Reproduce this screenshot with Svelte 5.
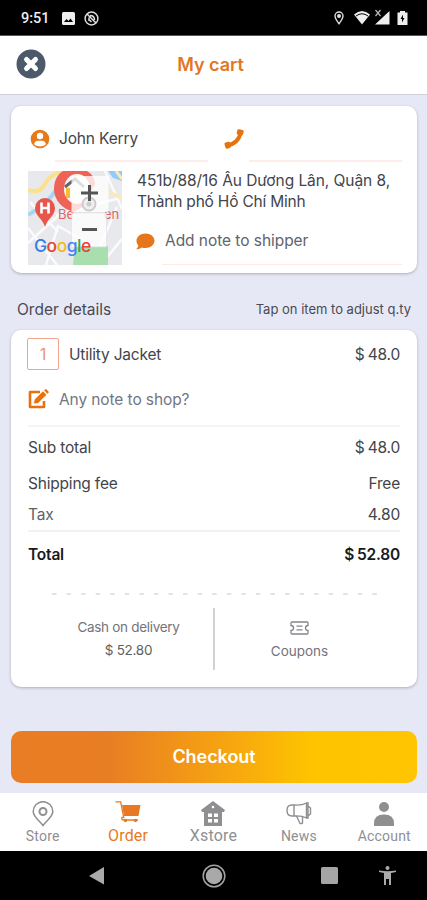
<script>
  let customer = { name: 'John Kerry', phone: '' }
  let item = { qty: 1, name: 'Utility Jacket', price: '$ 48.0' }

  let fees = [
    { key: 'sub', label: 'Sub total', value: '$ 48.0' },
    { key: 'ship', label: 'Shipping fee', value: 'Free' },
    { key: 'tax', label: 'Tax', value: '4.80' },
  ]
  let total = '$ 52.80'

  let tabs = ['Store', 'Order', 'Xstore', 'News', 'Account']
  let active = 'Order'
</script>

<div class="screen">
  <div class="status">
    <span class="time">9:51</span>
    <svg class="photo" width="13" height="13" viewBox="0 0 13 13">
      <rect width="13" height="13" rx="1.5" fill="#eee" />
      <path d="M2 10l2.5-3 2 2 2-2.5L11 10z" fill="#000" />
    </svg>
    <svg width="15" height="15" viewBox="0 0 15 15" fill="none" stroke="#ddd" stroke-width="1.5">
      <circle cx="7.5" cy="7.5" r="6.4" />
      <path d="M3 3l9 9M5 10V6.5M7.5 11l-2-2M6 4.5q4.5 0 4.5 4.5" />
    </svg>
    <div class="signals">
      <svg width="10" height="14" viewBox="0 0 10 14" fill="none" stroke="#ddd" stroke-width="1.4">
        <path d="M5 12.7C3.5 10.5 1 7.5 1 5a4 4 0 018 0c0 2.5-2.5 5.5-4 7.7z" />
        <circle cx="5" cy="5" r="1.3" fill="#ddd" />
      </svg>
      <svg class="wifi" width="16" height="14" viewBox="0 0 16 14">
        <path d="M0 3.5q8-7 16 0L8 13.5z" fill="#eee" />
        <path d="M2 5q6-4.5 12 0" fill="none" stroke="#000" stroke-width="1" />
      </svg>
      <svg class="cell" width="16" height="16" viewBox="0 0 16 16">
        <path d="M15.5 2v13.5H1z" fill="#eee" />
        <path d="M1.5 1l5 6M6.5 1l-5 6" stroke="#bbb" stroke-width="1.2" />
      </svg>
      <svg class="battery" width="11" height="14" viewBox="0 0 11 14">
        <path d="M3 0h5v1.5h2.5V14H.5V1.5H3z" fill="#eee" />
        <path d="M6 3.5L3.5 8H5v3.5L7.5 7H6z" fill="#000" />
      </svg>
    </div>
  </div>

  <header>
    <svg width="30" height="30" viewBox="0 0 30 30">
      <circle cx="15" cy="15" r="14.5" fill="#4c596b" />
      <path d="M10.5 10.5l9 9M19.5 10.5l-9 9" stroke="#fff" stroke-width="5" stroke-linecap="round" />
    </svg>
    <h1>My cart</h1>
  </header>

  <main>
    <section class="card delivery">
      <div class="contact">
        <div class="field">
          <svg width="20" height="20" viewBox="0 0 20 20">
            <circle cx="10" cy="10" r="9.3" fill="#e67a1b" />
            <circle cx="10" cy="7" r="3.2" fill="#fff" />
            <path d="M4 15.2q1-3.4 4-3.4h4q3 0 4 3.4-2.6 2.2-6 2.2t-6-2.2z" fill="#fff" />
          </svg>
          <span>{customer.name}</span>
        </div>
        <div class="field phone">
          <svg width="20" height="20" viewBox="0 0 20 20" fill="#e5740f">
            <path d="M16.300 3.500C16 10 10.500 15.500 3.500 16.300" fill="none" stroke="#e5740f" stroke-width="4" />
            <rect x="13" y=".5" width="6.500" height="5.500" rx="1.5" transform="rotate(14 16 3)" />
            <rect x=".8" y="13" width="5.500" height="6.500" rx="1.5" transform="rotate(-14 3.500 16)" />
          </svg>
          <span>{customer.phone}</span>
        </div>
      </div>

      <div class="place">
        <svg class="map" width="94" height="94" viewBox="0 0 94 94">
          <rect width="94" height="94" fill="#e8e9ec" />
          <path d="M80 0h14v10l-9-3z" fill="#91caff" />
          <path d="M0 44q9-5 17-12T30 15" fill="none" stroke="#a7d5f5" stroke-width="4" />
          <path d="M0 19q12 4 17-6T36 0" fill="none" stroke="#fce18b" stroke-width="4" />
          <path d="M0 72L31 44M18 94l12-39 50 28M2 31l28 30M77 0l17 38M64 94l25-58M28 44l64-17M0 57l29 37M76 90l18-22" fill="none" stroke="#fbfbfd" stroke-width="2.5" />
          <path d="M80 20l14 8M88 0l6 8" fill="none" stroke="#fce9b0" stroke-width="3" />
          <path d="M47 75h33v19H45z" fill="#a9dfaf" />
          <text x="30" y="48" class="district">Be</text>
          <text x="76" y="48" class="district">en</text>
          <path d="M46 41C34 38 26 29 26 18 26 9 30 3 35 0h24c5 3 8 8 8 13L54 36z" fill="#ef6258" />
          <ellipse cx="49" cy="18" rx="13" ry="15" fill="#f8f8f6" />
          <path d="M37 16l10-8 9 8" fill="none" stroke="#63686b" stroke-width="3" />
          <path d="M40 17v10" stroke="#f5bd32" stroke-width="4" />
          <path d="M17 56c-2-8-10-11-10-19a10 10 0 0120 0c0 8-8 11-10 19z" fill="#e8554d" />
          <path d="M13.5 31.5v11M20.5 31.5v11M13.5 37h7" stroke="#fff" stroke-width="2.6" />
          <rect x="43.5" y="5" width="37" height="36" fill="#fff" opacity=".78" />
          <circle cx="61" cy="33" r="6.5" fill="#f0f0f0" stroke="#ccc" stroke-width="2" />
          <circle cx="61" cy="33" r="2.5" fill="#ccc" />
          <path d="M53 22h17M61.5 14v16" stroke="#555" stroke-width="3" />
          <rect x="43.5" y="42" width="35" height="34" fill="#fff" stroke="#ddd" stroke-width=".6" opacity=".8" />
          <text x="6" y="81" class="google"><tspan fill="#3979e8">G</tspan><tspan fill="#e94235">o</tspan><tspan fill="#f5b915">o</tspan><tspan fill="#4285f4">g</tspan><tspan fill="#34a853">l</tspan><tspan fill="#ea4335">e</tspan></text>
          <path d="M54 58.5h15" stroke="#555" stroke-width="3" />
        </svg>
        <div class="address">
          <p><span class="street">451b/88/16 Âu Dương Lân, Quận 8,</span><br /><span class="city">Thành phố Hồ Chí Minh</span></p>
          <div class="shipper">
            <svg width="19" height="17" viewBox="0 0 19 17">
              <path d="M9.5.5c5 0 9 3.2 9 7.3s-4 7.2-9 7.2c-1.4 0-2.6-.2-3.7-.6-1.5 1-3.4 1.8-5.6 1.8 1.2-1.2 2-2.6 2.1-3.8C1.1 11.2.5 9.6.5 7.8c0-4.1 4-7.3 9-7.3z" fill="#e5761a" />
            </svg>
            <span>Add note to shipper</span>
          </div>
        </div>
      </div>
    </section>

    <div class="caption">
      <span>Order details</span>
      <small>Tap on item to adjust q.ty</small>
    </div>

    <section class="card summary">
      <div class="line item">
        <span class="qty">{item.qty}</span>
        <span class="name">{item.name}</span>
        <span class="value">{item.price}</span>
      </div>
      <div class="note">
        <svg width="22" height="20" viewBox="0 0 22 20">
          <path d="M12 3H2v15h14v-6" fill="none" stroke="#e5720d" stroke-width="2.6" stroke-linejoin="round" />
          <path d="M6 14.5l.7-4L15 2.3l3.4 3.4-8.3 8.2zM16 1.3l1-.9q.8-.6 1.6.2L20.3 2.3q.8.8.1 1.6l-1 .9z" fill="#e5720d" />
        </svg>
        <span>Any note to shop?</span>
      </div>
      {#each fees as fee}
        <div class="line {fee.key}">
          <span class="label">{fee.label}</span>
          <span class="value">{fee.value}</span>
        </div>
      {/each}
      <div class="line total">
        <span class="label">Total</span>
        <span class="value">{total}</span>
      </div>

      <svg class="dashes" width="326" height="2" viewBox="0 0 326 2">
        <path d="M0 1h326" stroke="#dadada" stroke-width="1.5" stroke-dasharray="4.5 10.06" />
      </svg>

      <div class="options">
        <div class="option cash">
          <span class="method">Cash on delivery</span>
          <span class="amount">{total}</span>
        </div>
        <div class="option coupons">
          <svg width="19" height="14" viewBox="0 0 19 14" fill="none" stroke="#85868a" stroke-width="1.3">
            <path d="M2 1h15q1 0 1 1v2.5q-2.5 0-2.5 2.5t2.5 2.5V12q0 1-1 1H2q-1 0-1-1V9.500q2.500 0 2.500-2.500T1 4.500V2q0-1 1-1zM6.500 5.200h6M6.500 8.800h6" />
          </svg>
          <span>Coupons</span>
        </div>
      </div>
    </section>

    <button type="button" class="checkout">Checkout</button>
  </main>

  <nav>
    {#each tabs as tab}
      <div class="tab {tab.toLowerCase()}" class:active={tab === active}>
        {#if tab === 'Store'}
          <svg width="22" height="26" viewBox="0 0 22 26" fill="none" stroke="currentColor" stroke-width="1.5">
            <path d="M11 24.5C8 20 1.2 16 1.2 10.5a9.8 9.8 0 0119.6 0C20.8 16 14 20 11 24.5z" />
            <circle cx="11" cy="10.5" r="3.5" stroke-width="2" />
          </svg>
        {:else if tab === 'Order'}
          <svg width="26" height="26" viewBox="0 0 26 26" fill="currentColor">
            <path d="M7 4h18.500l-2 11H9z" />
            <path d="M.5 .8h5.200l3 15.700H7q-.8 2.500 1 2.500h15" fill="none" stroke="currentColor" stroke-width="1.3" />
            <circle cx="10.500" cy="19.500" r="1.700" />
            <circle cx="20.500" cy="19.500" r="1.700" />
          </svg>
        {:else if tab === 'Xstore'}
          <svg width="26" height="26" viewBox="0 0 26 26" fill="currentColor">
            <path d="M13 0l12 9-1 2h-2v14H4V11H2L1 9z" />
            <circle cx="13" cy="6" r="1.3" fill="#fff" />
            <path d="M8 12.500h4V16H8zM14 12.500h4V16h-4zM8 18h4v3.500H8zM14 18h4v3.500h-4z" fill="#fff" />
          </svg>
        {:else if tab === 'News'}
          <svg width="26" height="26" viewBox="0 0 26 26" fill="none" stroke="currentColor" stroke-width="1.4">
            <path d="M8 4H6Q1 4 1 9.500T6 15h2q8-.5 12.500 2V2Q16 4.500 8 4zM8 4v11M20.500 2h1.500v15h-1.500M22 5l2.500 2v6L22 15M10.500 15l3.500 7.500q1.500.5 2.500-.5v-6" />
          </svg>
        {:else}
          <svg width="22" height="26" viewBox="0 0 22 26" fill="currentColor">
            <circle cx="11" cy="6" r="5" />
            <path d="M1 25v-2.500q0-9 10-9t10 9V25z" />
          </svg>
        {/if}
        <span>{tab}</span>
      </div>
    {/each}
  </nav>

  <div class="system">
    <svg width="17" height="20" viewBox="0 0 17 20"><path d="M16 1v17.5L1 10z" fill="#aaa" /></svg>
    <svg width="24" height="24" viewBox="0 0 24 24">
      <circle cx="12" cy="12" r="10.8" fill="none" stroke="#a2a2a2" stroke-width="1.5" />
      <circle cx="12" cy="12" r="8.3" fill="#a9a9a9" />
    </svg>
    <svg width="17" height="17" viewBox="0 0 17 17"><rect width="17" height="17" rx="1.5" fill="#a5a5a5" /></svg>
    <svg width="17" height="19" viewBox="0 0 17 19" fill="#aaa">
      <circle cx="8.5" cy="2" r="2" />
      <path d="M0 4.5q8.5 1.5 17 0V6l-5 1v12h-2v-6H7v6H5V7L0 6z" />
    </svg>
  </div>
</div>

<style>
  :global(body) {
    background: #e7e8f6;
  }

  .screen {
    width: 427px;
    height: 900px;
    overflow: hidden;
    background: #e7e8f6;
    color: #42454b;
    font-family: Inter, "Open Sans", sans-serif;
    font-size: 15.5px;
    display: flex;
    flex-direction: column;
  }

  svg {
    display: block;
    flex: none;
  }

  .status {
    height: 36px;
    flex: none;
    border-bottom: 1px solid #555;
    box-sizing: border-box;
    background: #000;
    display: flex;
    align-items: center;
    padding: 1px 19px 0 21px;
  }

  .time {
    color: #eee;
    font: 500 14.5px Roboto, sans-serif;
    width: 41px;
  }

  .photo {
    margin-right: 9px;
  }

  .signals {
    display: flex;
    align-items: center;
    margin-left: auto;
  }

  .wifi {
    margin-left: 10px;
  }

  .cell {
    margin: -2px 0 0 4px;
  }

  .battery {
    margin-left: 7px;
  }

  header {
    height: 58px;
    flex: none;
    background: #fff;
    border-bottom: 1px solid #cfd0da;
    display: flex;
    align-items: center;
    padding: 0 16px;
  }

  header svg {
    margin-top: -2px;
  }

  h1 {
    flex: 1;
    margin: -2px 36px 0 0;
    text-align: center;
    color: #e2771f;
    font-size: 18px;
    font-weight: 600;
  }

  main {
    height: 698px;
    flex: none;
    padding: 11px 10px 0 11px;
    box-sizing: border-box;
  }

  .card {
    background: #fff;
    border-radius: 10px;
    box-shadow: 0 1px 3px rgba(60, 60, 85, .35);
    box-sizing: border-box;
  }

  .delivery {
    height: 167px;
    padding: 0 15px 0 17px;
  }

  .contact {
    display: flex;
    height: 65px;
  }

  .field {
    display: flex;
    align-items: center;
    width: 195px;
    padding: 8px 0 0 2px;
    box-sizing: border-box;
    gap: 9px;
    background: linear-gradient(#ffedeb, #ffedeb) 27px 54px / 153px 2px no-repeat;
    height: 57px;
    letter-spacing: -.15px;
  }

  .phone {
    width: 179px;
    padding-left: 1px;
    background-position: 26px 54px;
  }

  .place {
    display: flex;
    height: 94px;
  }

  .district {
    fill: #df6462;
    font-size: 13px;
  }

  .google {
    font: 500 17.5px Inter, sans-serif;
    letter-spacing: -.5px;
  }

  .address {
    margin-left: 15px;
    flex: 1;
  }

  .address p {
    margin: 0;
    line-height: 20.5px;
    white-space: nowrap;
  }

  .street {
    letter-spacing: -.06px;
  }

  .city {
    letter-spacing: -.2px;
  }

  .shipper {
    display: flex;
    align-items: center;
    gap: 10px;
    height: 53px;
    padding-top: 5px;
    box-sizing: border-box;
    color: #60636c;
    letter-spacing: -.05px;
    background: linear-gradient(#ffe9e2, #ffe9e2) 25px 52px / 241px 1px no-repeat;
    line-height: 20px;
  }

  .shipper svg {
    margin-left: -1px;
  }

  .caption {
    display: flex;
    justify-content: space-between;
    align-items: center;
    height: 57px;
    padding: 16px 6px 0;
    box-sizing: border-box;
    color: #494a53;
    font-size: 15.5px;
  }

  .caption small {
    font-size: 13px;
    margin-top: -1px;
  }

  .summary {
    height: 357px;
    padding: 0 17px;
  }

  .line {
    display: flex;
    align-items: center;
    justify-content: space-between;
    letter-spacing: -.2px;
  }

  .value {
    word-spacing: -1px;
  }

  .item {
    height: 48px;
  }

  .qty {
    width: 32px;
    height: 32px;
    margin-left: -1px;
    box-sizing: border-box;
    border: 1.5px solid #f2a58d;
    border-radius: 2px;
    color: #ee9171;
    display: flex;
    align-items: center;
    justify-content: center;
  }

  .name {
    flex: 1;
    margin-left: 10px;
  }

  .note {
    display: flex;
    align-items: center;
    gap: 9px;
    height: 49px;
    padding-bottom: 5px;
    box-sizing: border-box;
    border-bottom: 2px solid #f4f4f5;
    color: #737681;
    letter-spacing: -.1px;
  }

  .sub {
    height: 40px;
  }

  .ship {
    height: 32px;
  }

  .tax {
    height: 31px;
    border-bottom: 2px solid #f2f2f3;
  }

  .tax .label {
    color: #606167;
  }

  .total {
    height: 45px;
    color: #18191d;
    font-weight: 600;
  }

  .dashes {
    margin: 16px 0 0 24px;
  }

  .options {
    display: flex;
    margin-top: 13px;
    height: 62px;
  }

  .option {
    display: flex;
    flex-direction: column;
    align-items: center;
    color: #73747b;
    font-size: 13.5px;
    line-height: 22px;
  }

  .cash {
    width: 187px;
    box-sizing: border-box;
    border-right: 2px solid #d2d2d3;
    padding: 8px 0 0 16px;
  }

  .cash .method {
    letter-spacing: -.3px;
  }

  .cash .amount {
    color: #5d5e62;
    letter-spacing: -.3px;
    margin-top: 1px;
  }

  .coupons {
    width: 169px;
  }

  .coupons svg {
    margin: 13px 0 5px;
  }

  .checkout {
    display: block;
    width: 406px;
    height: 52px;
    margin-top: 44px;
    padding: 0 0 1px;
    border: none;
    border-radius: 10px;
    background: linear-gradient(90deg, #e87d25 0%, #e87e24 24%, #f5a012 50%, #fec400 74%, #ffc500 100%);
    color: #fff;
    font: 600 18px Inter, sans-serif;
    letter-spacing: -.05px;
  }

  nav {
    display: flex;
    height: 58px;
    flex: none;
    background: #fff;
    color: #8f8f92;
    font: 14px Roboto, sans-serif;
  }

  .tab {
    width: 20%;
    display: flex;
    flex-direction: column;
    align-items: center;
    padding-top: 8px;
    box-sizing: border-box;
  }

  .tab span {
    line-height: 18px;
    letter-spacing: .2px;
  }

  .tab.active {
    color: #e87922;
  }

  .order span,
  .xstore span {
    font-size: 16px;
    line-height: 17px;
  }

  .system {
    height: 49px;
    flex: none;
    background: #000;
    display: flex;
    align-items: center;
    padding-left: 88px;
    box-sizing: border-box;
  }

  .system svg:nth-child(2) {
    margin-left: 97px;
  }

  .system svg:nth-child(3) {
    margin-left: 95px;
  }

  .system svg:nth-child(4) {
    margin-left: 41px;
  }
</style>
